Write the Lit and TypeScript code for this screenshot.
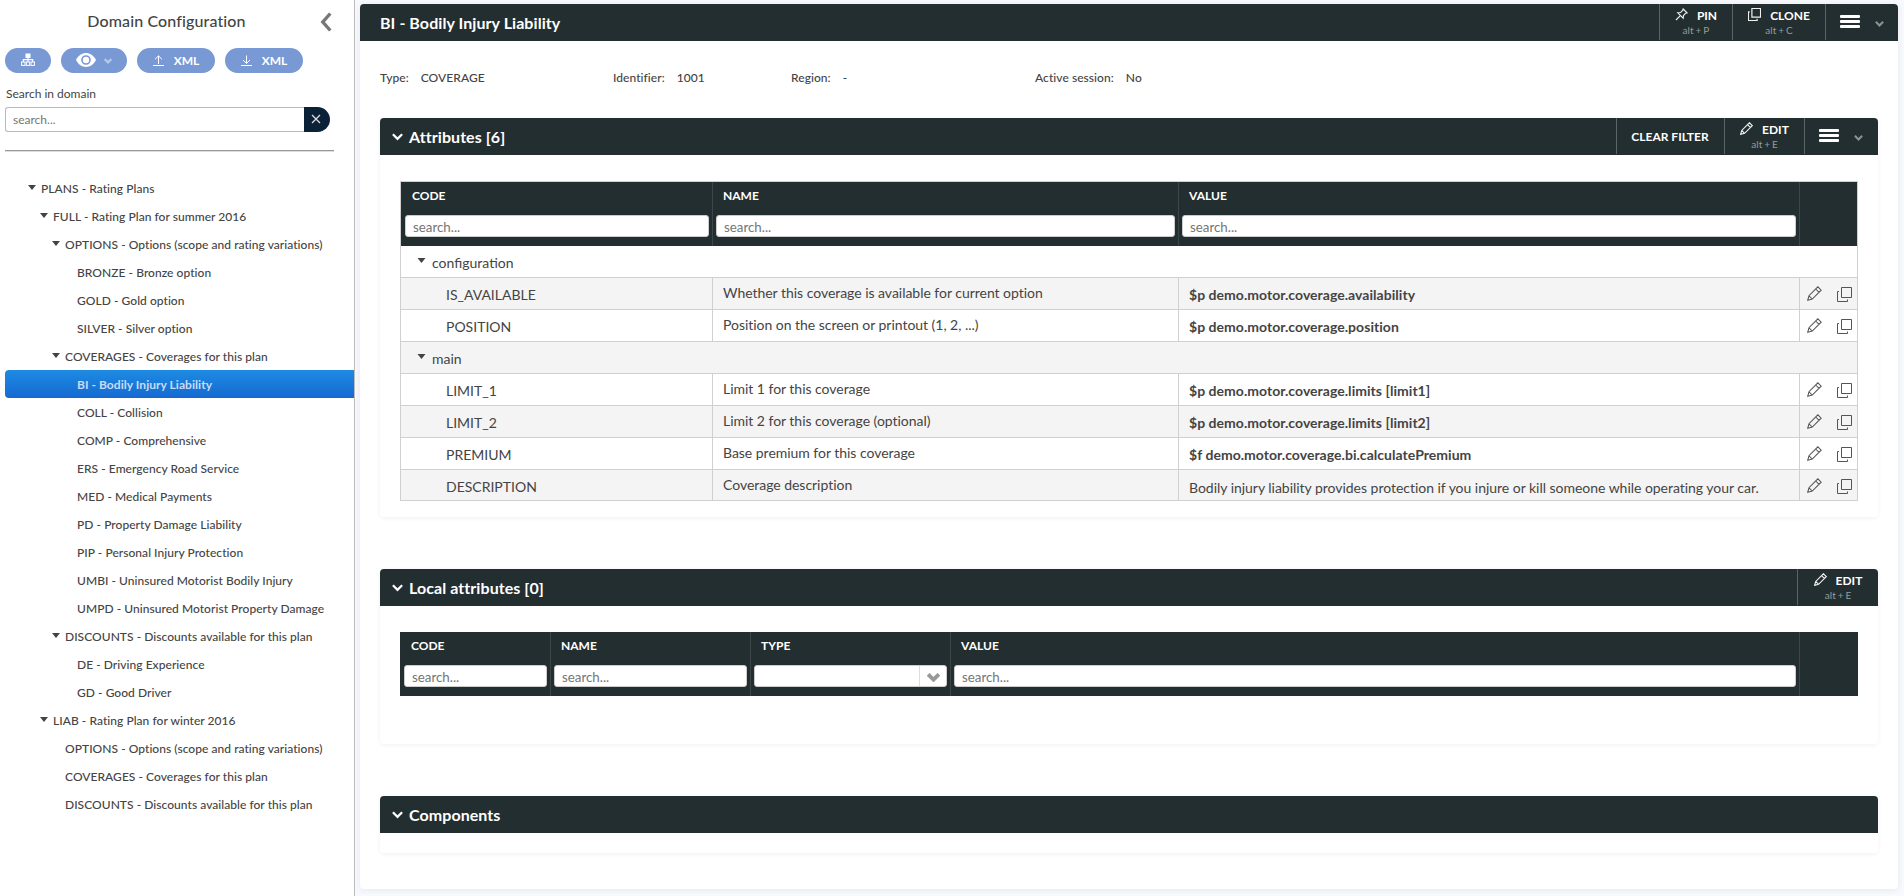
import { LitElement, html, css, svg, nothing } from "lit";
import { customElement, property } from "lit/decorators.js";
import { classMap } from "lit/directives/class-map.js";

type Node = { label: string; level: number; open?: boolean; selected?: boolean };

const TREE: Node[] = [
  { label: "PLANS - Rating Plans", level: 0, open: true },
  { label: "FULL - Rating Plan for summer 2016", level: 1, open: true },
  { label: "OPTIONS - Options (scope and rating variations)", level: 2, open: true },
  { label: "BRONZE - Bronze option", level: 3 },
  { label: "GOLD - Gold option", level: 3 },
  { label: "SILVER - Silver option", level: 3 },
  { label: "COVERAGES - Coverages for this plan", level: 2, open: true },
  { label: "BI - Bodily Injury Liability", level: 3, selected: true },
  { label: "COLL - Collision", level: 3 },
  { label: "COMP - Comprehensive", level: 3 },
  { label: "ERS - Emergency Road Service", level: 3 },
  { label: "MED - Medical Payments", level: 3 },
  { label: "PD - Property Damage Liability", level: 3 },
  { label: "PIP - Personal Injury Protection", level: 3 },
  { label: "UMBI - Uninsured Motorist Bodily Injury", level: 3 },
  { label: "UMPD - Uninsured Motorist Property Damage", level: 3 },
  { label: "DISCOUNTS - Discounts available for this plan", level: 2, open: true },
  { label: "DE - Driving Experience", level: 3 },
  { label: "GD - Good Driver", level: 3 },
  { label: "LIAB - Rating Plan for winter 2016", level: 1, open: true },
  { label: "OPTIONS - Options (scope and rating variations)", level: 2 },
  { label: "COVERAGES - Coverages for this plan", level: 2 },
  { label: "DISCOUNTS - Discounts available for this plan", level: 2 },
];

type Row = { group?: string; code?: string; name?: string; value?: string; plain?: boolean };

const ROWS: Row[] = [
  { group: "configuration" },
  { code: "IS_AVAILABLE", name: "Whether this coverage is available for current option", value: "$p demo.motor.coverage.availability" },
  { code: "POSITION", name: "Position on the screen or printout (1, 2, ...)", value: "$p demo.motor.coverage.position" },
  { group: "main" },
  { code: "LIMIT_1", name: "Limit 1 for this coverage", value: "$p demo.motor.coverage.limits [limit1]" },
  { code: "LIMIT_2", name: "Limit 2 for this coverage (optional)", value: "$p demo.motor.coverage.limits [limit2]" },
  { code: "PREMIUM", name: "Base premium for this coverage", value: "$f demo.motor.coverage.bi.calculatePremium" },
  { code: "DESCRIPTION", name: "Coverage description", value: "Bodily injury liability provides protection if you injure or kill someone while operating your car.", plain: true },
];

const stroke = (size: number, body: unknown, width = 1.1, box = 16) => html`<svg class="ico" width=${size} height=${size} viewBox="0 0 ${box} ${box}" fill="none" stroke="currentColor" stroke-width=${width}>${body}</svg>`;

const pencil = (size: number, w = 1.1) => stroke(size, svg`<path d="M.8 15.2 2.1 10.4 11.6.9 15.1 4.4 5.6 13.9ZM2.1 10.4 5.6 13.9M9.3 3.2 12.8 6.7"/>`, w);
const copy = (size: number, w = 1) => stroke(size, svg`<path d="M4.5 .5H14.5V10.5H4.5Z"/><path d="M2 4.5H.5V14.5H10.5V12.5"/>`, w, 15);
const pin = (size: number) => stroke(size, svg`<path d="M10 1.2 14.8 6 13.2 6.4 10.4 9.2 10.1 12.6 3.4 5.9 6.8 5.6 9.6 2.8Z"/><path d="M6.6 9.4 1.2 14.8"/>`, 1.4);
const chevron = (w: number, h: number, sw = 2.2) => html`<svg class="ico" width=${w} height=${h} viewBox="0 0 10 7" fill="none" stroke="currentColor" stroke-width=${sw}><path d="M.8 1 5 5.2 9.2 1"/></svg>`;
const caret = (w: number, h: number) => html`<svg class="ico" width=${w} height=${h} viewBox="0 0 8 5" fill="currentColor"><path d="M0 0H8L4 5Z"/></svg>`;
const burger = () => html`<svg class="ico" width="20" height="14" viewBox="0 0 20 14" fill="currentColor"><rect width="20" height="3" rx="1"/><rect y="5" width="20" height="3" rx="1"/><rect y="10" width="20" height="3" rx="1"/></svg>`;

const base = css`
  * { box-sizing: border-box; }
  .ico { display: block; flex: none; }
`;

@customElement("domain-sidebar")
class DomainSidebar extends LitElement {
  static styles = [base, css`
    :host { display: block; width: 355px; flex: none; background: #fff; border-right: 1px solid #bbb; color: #444; }
    .title { display: flex; align-items: center; height: 43px; padding-left: 5px; }
    .title span { width: 323px; text-align: center; font-size: 16px; font-weight: 500; letter-spacing: .12px; padding: 0 0 2px 0; }
    .title .ico { margin-left: -8px; color: #777; }
    .buttons { display: flex; gap: 10px; padding: 5px 0 0 5px; }
    .pill { display: flex; align-items: center; justify-content: center; height: 25px; border-radius: 13px; background: #7899d4; color: #fff; font-size: 12px; font-weight: 700; }
    .pill.org { width: 46px; padding-bottom: 1px; }
    .pill.eye { width: 66px; gap: 8px; }
    .pill.eye .ico { margin-top: -1px; }
    .pill.eye .down { color: #b5c8ea; padding-top: 2px; }
    .pill.xml { width: 78px; gap: 10px; }
    .pill.xml .ico { margin-top: 1px; }
    .label { padding: 12px 0 0 6px; font-size: 12px; line-height: 18px; }
    .search { display: flex; height: 25px; margin: 4px 0 0 5px; }
    .field { width: 299px; border: 1px solid #bbb; border-right: 0; border-radius: 3px 0 0 3px; padding-left: 7px; font-size: 12px; line-height: 24px; color: #757575; }
    .clear { width: 26px; border-radius: 0 13px 13px 0; background: #0b2138; color: #ddd; display: flex; align-items: center; justify-content: center; padding: 0 2px 2px 0; }
    .rule { height: 1px; background: #999; margin: 18px 0 23px 5px; width: 329px; box-shadow: 0 1px #ddd; }
    .node { display: flex; align-items: center; height: 28px; margin-left: 5px; padding-left: calc(23px + var(--level) * 12px); font-size: 12px; font-weight: 500; letter-spacing: .045px; border-radius: 4px 0 0 4px; }
    .arrow { width: 13px; padding-bottom: 1px; }
    .selected { background: linear-gradient(#1d8be2, #1569d2); color: #c8dcf5; font-weight: 700; }
  `];

  render() {
    return html`
      <div class="title"><span>Domain Configuration</span>
        <svg class="ico" width="12" height="20" viewBox="0 0 12 20" fill="none" stroke="currentColor" stroke-width="3.4"><path d="M10.3 1.5 2.8 10 10.3 18.5"/></svg></div>
      <div class="buttons">
        <div class="pill org"><svg class="ico" width="14" height="14" viewBox="0 0 14 14" fill="none" stroke="#fff"><rect x="5" y="1" width="4" height="3.5" fill="#fff"/><path d="M7 4.5V9M2.3 9V6.7H11.7V9" stroke-width="1.2"/><rect x=".6" y="9" width="3.4" height="3.4"/><rect x="5.3" y="9" width="3.4" height="3.4"/><rect x="10" y="9" width="3.4" height="3.4"/></svg></div>
        <div class="pill eye"><svg class="ico" width="20" height="14" viewBox="0 0 20 14"><path fill="#fff" fill-rule="evenodd" d="M0 7C4.5-2.2 15.5-2.2 20 7 15.5 16.2 4.5 16.2 0 7ZM10 2.2A4.8 4.8 0 1 0 10 11.8 4.8 4.8 0 1 0 10 2.2Z"/><circle cx="10" cy="7" r="3.2" fill="#fff"/></svg><span class="down">${chevron(8, 6, 2.8)}</span></div>
        <div class="pill xml"><svg class="ico" width="11" height="12" viewBox="0 0 11 12" fill="none" stroke="#fff"><path d="M0 10.5H11M5.5 9V1M2 4.3 5.5.9 9 4.3"/></svg>XML</div>
        <div class="pill xml"><svg class="ico" width="11" height="12" viewBox="0 0 11 12" fill="none" stroke="#fff"><path d="M0 10.5H11M5.5.5V8.3M2 5 5.5 8.4 9 5"/></svg>XML</div>
      </div>
      <div class="label">Search in domain</div>
      <div class="search"><div class="field">search...</div><div class="clear"><svg class="ico" width="10" height="10" viewBox="0 0 10 10" stroke="currentColor" stroke-width="1.3"><path d="M1 1 9 9M9 1 1 9"/></svg></div></div>
      <div class="rule"></div>
      ${TREE.map((n) => html`<div class=${classMap({ node: true, selected: !!n.selected })} style="--level:${n.level}">
        <span class="arrow">${n.open ? caret(8, 5) : nothing}</span>${n.label}</div>`)}
    `;
  }
}

@customElement("header-bar")
class HeaderBar extends LitElement {
  @property() heading = "";
  @property({ type: Boolean }) collapsible = false;
  static styles = [base, css`
    :host { display: flex; height: 37px; background: #232e30; color: #fff; border-radius: 4px 4px 0 0; padding-left: 20px; }
    :host([collapsible]) { padding-left: 12px; }
    .heading { flex: 1; display: flex; align-items: center; font-size: 16px; font-weight: 700; letter-spacing: .07px; padding-bottom: 1px; }
    .chev { width: 17px; padding-top: 1px; }
    ::slotted(*) { flex: none; }
  `];
  render() {
    return html`<div class="heading">${this.collapsible ? html`<span class="chev">${chevron(11, 8, 2)}</span>` : nothing}${this.heading}</div><slot></slot>`;
  }
}

@customElement("app-root")
class AppRoot extends LitElement {
  static styles = [base, css`
    :host { display: flex; height: 896px; font-family: Lato, sans-serif; color: #444; background: #f8f9fd; overflow: hidden; }
    .main { flex: 1; padding: 4px 6px 7px 5px; min-width: 0; }
    .card { height: 885px; background: #fff; border-radius: 4px; box-shadow: 0 1px 6px rgba(40, 50, 90, .09); }
    .act { height: 36px; border-left: 1px solid #5a6365; font-size: 12px; font-weight: 700; }
    .act.two { display: grid; grid-template-rows: 18px 12px; padding-top: 3px; justify-items: center; }
    .line { display: flex; align-items: center; gap: 9px; line-height: 18px; }
    .line .ico { margin-top: -3px; color: #f0f0f0; }
    .hint { font-size: 10px; font-weight: 400; line-height: 11px; color: #959c9d; word-spacing: -.8px; letter-spacing: .1px; }
    .act.center { display: flex; align-items: center; justify-content: center; padding: 1px 1px 0 0; }
    .act.menu { display: flex; align-items: center; gap: 15px; padding-left: 14px; }
    .dim { color: #8a9293; padding-top: 4px; }
    .w73 { width: 73px; } .w93 { width: 93px; } .w74 { width: 74px; } .w108 { width: 108px; } .w80 { width: 80px; } .w81 { width: 81px; }
    .facts { display: grid; grid-template-columns: 233px 178px 244px 1fr; padding: 28px 0 0 20px; height: 77px; font-size: 12px; line-height: 18px; font-weight: 500; letter-spacing: .06px; }
    .fact { display: flex; gap: 12px; }
    .panel { margin: 0 20px; border-radius: 4px; box-shadow: 0 1px 5px rgba(0, 0, 0, .06); background: #fff; }
    .attrs { height: 399px; margin-bottom: 52px; }
    .local { height: 175px; margin-bottom: 52px; }
    .comps { height: 57px; }
    .table { margin: 26px 20px 0; border: 1px solid #d0d0d0; }
    .grid { display: grid; grid-template-columns: 312px 466px 621px 1fr; }
    .th { height: 64px; background: #232e30; color: #fff; font-size: 12px; font-weight: 700; padding: 6px 3px 0 4px; border-right: 1px solid #3d4749; }
    .th:last-child { border-right: 0; }
    .th span { display: block; padding-left: 7px; line-height: 16px; height: 27px; }
    .input { height: 22px; background: #fff; border: 1px solid #ccc; border-radius: 3px; font-size: 13.33px; font-weight: 400; line-height: 22px; color: #757575; padding-left: 7px; display: flex; justify-content: flex-end; }
    .input i { flex: 1; font-style: normal; }
    .drop { width: 27px; border-left: 1px solid #ddd; color: #999; display: flex; align-items: center; justify-content: center; padding-top: 2px; }
    .head > .th { padding-left: 3px; }
    .head > .th:first-child { padding-left: 4px; }
    .tr { height: 32px; border-bottom: 1px solid #d0d0d0; font-size: 14px; background: #fff; }
    .tr:last-child { height: 30px; border-bottom: 0; }
    .tr:nth-child(odd) { background: #f4f4f4; }
    .group { display: flex; gap: 6px; padding: 7px 0 0 16px; line-height: 20px; }
    .group .ico { margin-top: 5px; }
    .td { border-right: 1px solid #d0d0d0; line-height: 20px; white-space: nowrap; }
    .td:last-child { border-right: 0; }
    .code { padding: 7px 0 0 45px; }
    .name { padding: 5px 0 0 10px; letter-spacing: -.03px; }
    .value { padding: 7px 0 0 10px; font-weight: 700; letter-spacing: .04px; }
    .value.plain { font-weight: 400; letter-spacing: -.03px; padding-top: 8px; }
    .tools { display: flex; gap: 15px; padding: 9px 0 0 7px; color: #555; }
    .tools .ico:first-child { margin-top: -1px; }
    .table.bare { border: 0; margin-top: 26px; }
    .cols { display: grid; grid-template-columns: 151px 200px 200px 849px 1fr; }
    .cols > .th:first-child { padding-left: 4px; }
    .cols > .th { padding-left: 3px; }
  `];

  render() {
    return html`
      <domain-sidebar></domain-sidebar>
      <div class="main"><div class="card">
        <header-bar heading="BI - Bodily Injury Liability">
          <div class="act two w73"><div class="line">${pin(13)}PIN</div><div class="hint">alt + P</div></div>
          <div class="act two w93"><div class="line">${copy(13, 1.4)}CLONE</div><div class="hint">alt + C</div></div>
          <div class="act menu w73">${burger()}<span class="dim">${chevron(9, 6, 2.5)}</span></div>
        </header-bar>
        <div class="facts">
          <div class="fact"><span>Type:</span><span>COVERAGE</span></div>
          <div class="fact"><span>Identifier:</span><span>1001</span></div>
          <div class="fact"><span>Region:</span><span>-</span></div>
          <div class="fact"><span>Active session:</span><span>No</span></div>
        </div>
        <div class="panel attrs">
          <header-bar collapsible heading="Attributes [6]">
            <div class="act center w108">CLEAR FILTER</div>
            <div class="act two w80"><div class="line">${pencil(13, 1.4)}EDIT</div><div class="hint">alt + E</div></div>
            <div class="act menu w74">${burger()}<span class="dim">${chevron(9, 6, 2.5)}</span></div>
          </header-bar>
          <div class="table">
            <div class="grid head">
              ${["CODE", "NAME", "VALUE"].map((t) => html`<div class="th"><span>${t}</span><div class="input"><i>search...</i></div></div>`)}
              <div class="th"></div>
            </div>
            ${ROWS.map((r) => r.group
              ? html`<div class="tr group">${caret(9, 5)}${r.group}</div>`
              : html`<div class="tr grid">
                  <div class="td code">${r.code}</div><div class="td name">${r.name}</div>
                  <div class=${classMap({ td: true, value: true, plain: !!r.plain })}>${r.value}</div>
                  <div class="td tools">${pencil(15)}${copy(15)}</div></div>`)}
          </div>
        </div>
        <div class="panel local">
          <header-bar collapsible heading="Local attributes [0]">
            <div class="act two w81"><div class="line">${pencil(13, 1.4)}EDIT</div><div class="hint">alt + E</div></div>
          </header-bar>
          <div class="table bare"><div class="cols">
            ${["CODE", "NAME", "TYPE", "VALUE"].map((t) => html`<div class="th"><span>${t}</span><div class="input">${t === "TYPE" ? html`<div class="drop">${chevron(13, 9, 3)}</div>` : html`<i>search...</i>`}</div></div>`)}
            <div class="th"></div>
          </div></div>
        </div>
        <div class="panel comps"><header-bar collapsible heading="Components"></header-bar></div>
      </div></div>
    `;
  }
}
